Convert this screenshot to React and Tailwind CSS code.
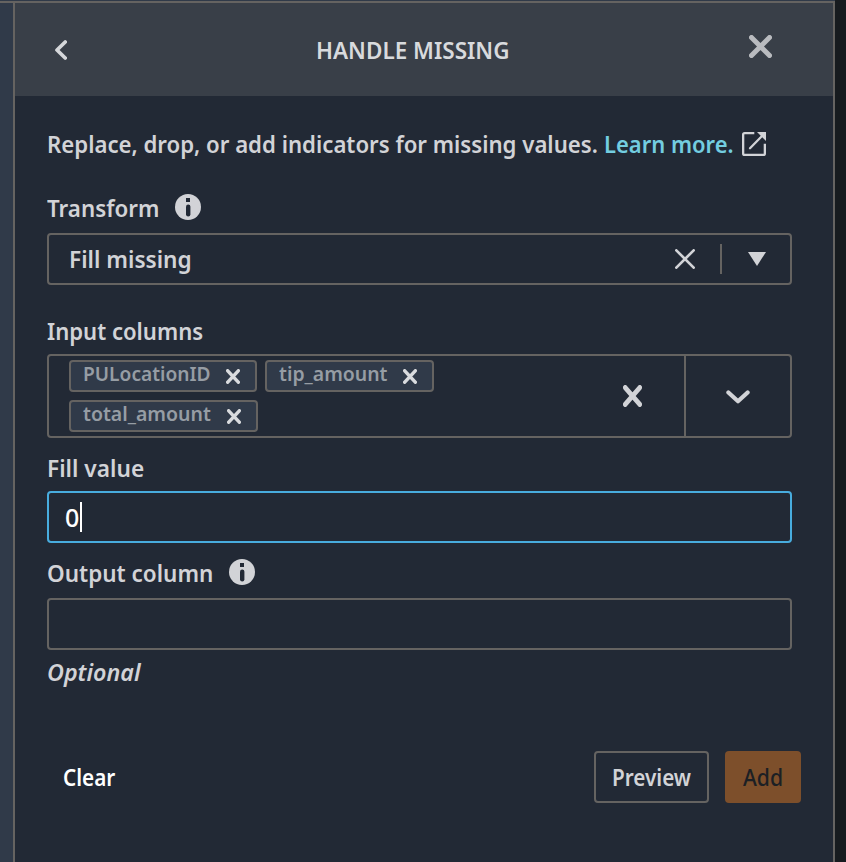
import React from "react";

function Cross({ className, width, inset = 2 }) {
  return (
    <svg viewBox="0 0 24 24" preserveAspectRatio="none" className={className} fill="none" stroke="currentColor" strokeWidth={width} strokeLinecap="round">
      <path d={`M${inset} ${inset}L${24 - inset} ${24 - inset}M${24 - inset} ${inset}L${inset} ${24 - inset}`} />
    </svg>
  );
}

function InfoIcon({ className }) {
  return (
    <svg viewBox="0 0 26 26" className={className}>
      <circle cx="13" cy="13" r="13" fill="#d2d3d7" />
      <rect x="11" y="4" width="4" height="4" fill="#222935" />
      <rect x="11" y="10.5" width="4.4" height="12" rx="2.2" fill="#222935" />
    </svg>
  );
}

function Text({ className, children }) {
  return <span className={`block w-max shrink-0 origin-left whitespace-nowrap ${className}`}>{children}</span>;
}

function Chip({ label, className, labelClass }) {
  return (
    <div className={`flex h-8 items-center justify-between rounded-[4px] border-2 border-[#656361] bg-[#303a49] pr-[15px] pl-3 ${className}`}>
      <div className="w-0">
        <Text className={`-mt-[6px] text-[20.5px] leading-7 text-[#969da4] ${labelClass}`}>{label}</Text>
      </div>
      <Cross className="h-[15px] w-[14px] text-[#d9dbde]" width={5.6} inset={2.8} />
    </div>
  );
}

export default function App() {
  return (
    <div className="flex h-[862px] w-[846px] overflow-hidden bg-[#171b1f] font-['Noto_Sans','Open_Sans',sans-serif] text-[23.5px] leading-8 font-semibold text-[#d2d3d7]">
      <div className="flex w-[835px] flex-col bg-[#303a49] pt-px">
        <div className="flex flex-1 border-t-2 border-[#656361]">
          <div className="w-[13px] bg-[#303a49]" />
          <div className="flex w-[822px] flex-col border-x-2 border-[#656361] bg-[#222935]">
            <header className="flex h-[93px] items-center bg-[#393f48] pl-[40px]">
              <svg viewBox="0 0 12 20" className="h-5 w-3" fill="none" stroke="#d5d7da" strokeWidth="3.7" strokeLinecap="round" strokeLinejoin="round">
                <path d="M10.2 2L2 10l8.2 8" />
              </svg>
              <div className="ml-[248.5px] w-[433.5px]">
                <Text className="scale-x-[0.957] text-[#d8dadd]">HANDLE MISSING</Text>
              </div>
              <Cross className="-mt-[6px] h-[23px] w-[23px] text-[#b9bbbf]" width={5.2} inset={2.6} />
            </header>

            <main className="flex flex-col pl-8">
              <div className="mt-8 flex h-8">
                <div className="w-[557px]">
                  <Text className="scale-x-[0.944]">Replace, drop, or add indicators for missing values.</Text>
                </div>
                <div className="w-[138px]">
                  <Text className="scale-x-[0.935] text-[#73cde0]">Learn more.</Text>
                </div>
                <svg viewBox="0 0 24 24" className="mt-1 h-6 w-6" fill="none" stroke="#d2d3d7" strokeWidth="2.3">
                  <path d="M12.3 1.15H2.6Q1.15 1.15 1.15 2.6V21.4Q1.15 22.85 2.6 22.85H21.4Q22.85 22.85 22.85 21.4V11.8" />
                  <path d="M8 16.2L20 4" strokeLinecap="round" />
                  <path d="M15 0H24V9L21.5 6.5L17.5 2.5Z" fill="#d2d3d7" stroke="none" />
                </svg>
              </div>

              <div className="mt-8 flex h-8">
                <div className="w-[128px]"><Text className="scale-x-[0.95]">Transform</Text></div>
                <InfoIcon className="mt-[2px] h-[26px] w-[26px]" />
              </div>
              <div className="mt-[9px] flex h-[52px] w-[745px] items-center rounded-[4px] border-2 border-[#656361] pl-5">
                <div className="w-[606px]"><Text className="scale-x-[0.963]">Fill missing</Text></div>
                <Cross className="h-5 w-5" width={3.2} inset={1.6} />
                <div className="ml-[25px] h-[30px] w-[2px] bg-[#656361]" />
                <svg viewBox="0 0 18 14" className="-mt-[1px] ml-[26px] h-[14px] w-[18px]"><path d="M0 0H18L9 14Z" fill="#d2d3d7" /></svg>
              </div>

              <Text className="mt-[30px] scale-x-[0.94]">Input columns</Text>
              <div className="mt-[7px] flex h-[84px] w-[745px] rounded-[4px] border-2 border-[#656361]">
                <div className="flex w-[553px] flex-wrap content-start gap-2 pt-1 pl-5">
                  <Chip label="PULocationID" className="w-[188px]" labelClass="scale-x-[0.935]" />
                  <Chip label="tip_amount" className="w-[169px]" labelClass="scale-x-[0.948]" />
                  <Chip label="total_amount" className="w-[189px]" labelClass="scale-x-[0.95]" />
                </div>
                <div className="flex w-[82px] items-center pl-[20.5px]">
                  <Cross className="h-[22px] w-[19px]" width={5.6} inset={2.8} />
                </div>
                <div className="flex w-[106px] items-center justify-center border-l-2 border-[#656361]">
                  <svg viewBox="0 0 24 14" className="mt-[2px] h-[14px] w-6" fill="none" stroke="#d2d3d7" strokeWidth="4.2" strokeLinecap="round" strokeLinejoin="round">
                    <path d="M2.4 2.5L12 11.3L21.6 2.5" />
                  </svg>
                </div>
              </div>

              <Text className="mt-[14px] scale-x-[0.965]">Fill value</Text>
              <div className="mt-[7px] flex h-[52px] w-[745px] items-center rounded-[4px] border-2 border-[#48acde] pl-4 text-white">
                <div className="w-[15px]"><Text className="text-[25px] font-medium">0</Text></div>
                <div className="h-[30px] w-[2px] bg-white" />
              </div>

              <div className="mt-[14px] flex h-8">
                <div className="w-[182px]"><Text className="scale-x-[0.957]">Output column</Text></div>
                <InfoIcon className="mt-[2px] h-[26px] w-[26px]" />
              </div>
              <div className="mt-[9px] h-[52px] w-[745px] rounded-[4px] border-2 border-[#656361]" />
              <Text className="mt-[6px] scale-x-[0.99] italic">Optional</Text>

              <div className="mt-[63px] flex h-[52px] items-center">
                <div className="w-[531px] pl-4"><Text className="scale-x-[0.9] text-[23px] text-white">Clear</Text></div>
                <div className="ml-4 flex h-[52px] w-[115px] items-center rounded-[4px] border-2 border-[#656361] pl-4">
                  <Text className="scale-x-[0.9] text-[23px]">Preview</Text>
                </div>
                <div className="ml-4 flex h-[52px] w-[76px] items-center rounded-[4px] bg-[#7d4f2b] pl-[18px]">
                  <Text className="scale-x-[0.92] text-[23px] font-medium text-[#1c2024]">Add</Text>
                </div>
              </div>
            </main>
          </div>
        </div>
      </div>
    </div>
  );
}
